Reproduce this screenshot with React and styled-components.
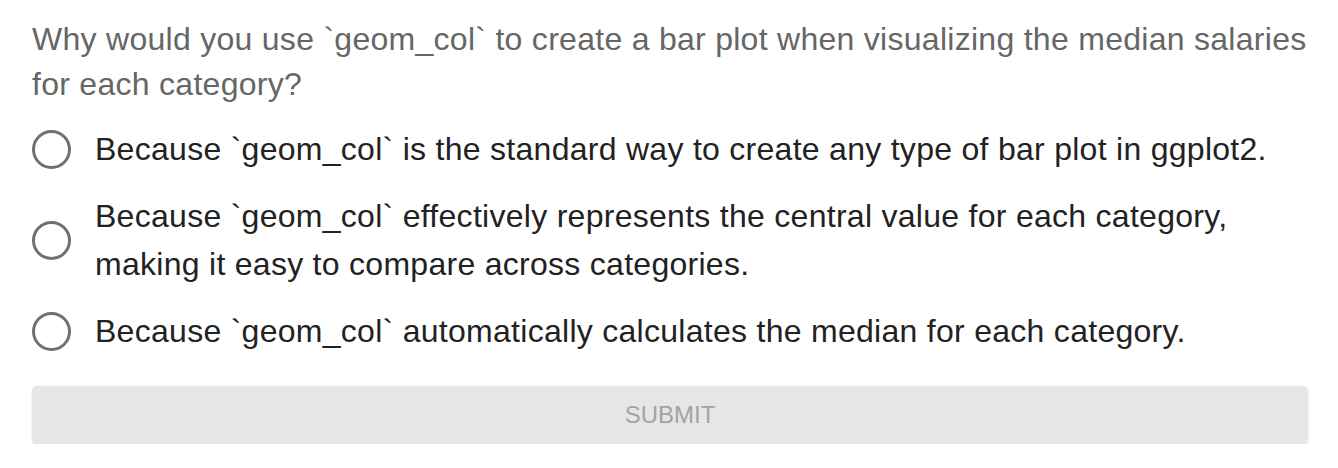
import React from "react";
import styled, { createGlobalStyle } from "styled-components";

const Global = createGlobalStyle`
  html, body { margin: 0; padding: 0; background: #fff; }
  body { font-family: "Liberation Sans", Arial, sans-serif; }
`;

const Wrap = styled.div`
  padding: 17px 26px 0 32px;
  display: flex;
  flex-direction: column;
`;

const Question = styled.div`
  font-size: 32px;
  letter-spacing: 0.28px;
  line-height: 45px;
  color: #666;
  margin-bottom: 18px;
`;

const Options = styled.div`
  display: flex;
  flex-direction: column;
  gap: 19px;
`;

const Option = styled.label`
  display: flex;
  align-items: center;
  gap: 24px;
  cursor: pointer;
`;

const Radio = styled.span`
  flex: none;
  width: 39px;
  height: 39px;
  box-sizing: border-box;
  border: 3px solid #707070;
  border-radius: 50%;
`;

const OptionText = styled.span`
  font-size: 32px;
  letter-spacing: 0.28px;
  line-height: 48px;
  color: #222;
`;

const Submit = styled.button`
  margin-top: 31px;
  width: 1276px;
  height: 58px;
  border: none;
  border-radius: 5px;
  background: #e6e6e6;
  color: #a3a3a3;
  font-family: "Liberation Sans", Arial, sans-serif;
  font-size: 24px;
  box-shadow: 0 1px 3px rgba(0, 0, 0, 0.12);
  cursor: default;
`;

const options = [
  "Because `geom_col` is the standard way to create any type of bar plot in ggplot2.",
  "Because `geom_col` effectively represents the central value for each category, making it easy to compare across categories.",
  "Because `geom_col` automatically calculates the median for each category.",
];

export default function App() {
  return (
    <>
      <Global />
      <Wrap>
        <Question>
          Why would you use `geom_col` to create a bar plot when visualizing the median salaries for each category?
        </Question>
        <Options>
          {options.map((o) => (
            <Option key={o}>
              <Radio />
              <OptionText>{o}</OptionText>
            </Option>
          ))}
        </Options>
        <Submit disabled>SUBMIT</Submit>
      </Wrap>
    </>
  );
}
